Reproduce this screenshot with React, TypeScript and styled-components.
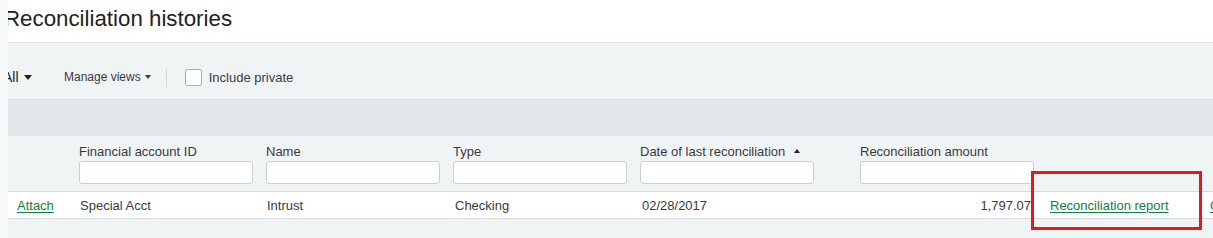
import styled, { createGlobalStyle } from "styled-components";

const GlobalStyle = createGlobalStyle`
  html, body {
    margin: 0;
    padding: 0;
    background: #f1f4f5;
    font-family: "Liberation Sans", Arial, sans-serif;
    color: #393a3d;
  }
`;

const columns = [
    { key: "id", label: "Financial account ID" },
    { key: "name", label: "Name" },
    { key: "type", label: "Type" },
    { key: "date", label: "Date of last reconciliation", sorted: true, wide: true },
    { key: "amount", label: "Reconciliation amount" },
];

const row = {
    id: "Special Acct",
    name: "Intrust",
    type: "Checking",
    date: "02/28/2017",
    amount: "1,797.07",
};

export default function App() {
    return (
        <Page>
            <GlobalStyle />
            <Sidebar />
            <Main>
                <TitleBar>
                    <Title>Reconciliation histories</Title>
                </TitleBar>
                <Toolbar>
                    <ViewPicker>
                        All <Caret />
                    </ViewPicker>
                    <ManageViews>
                        Manage views <SmallCaret />
                    </ManageViews>
                    <Divider />
                    <CheckLabel>
                        <Box />
                        Include private
                    </CheckLabel>
                </Toolbar>
                <Band />
                <Table>
                    <HeaderRow>
                        <HeadCell $width={64} />
                        {columns.map((c) => (
                            <HeadCell key={c.key} $width={c.wide ? 220 : 187}>
                                <HeadLabel>
                                    {c.label}
                                    {c.sorted && <SortArrow />}
                                </HeadLabel>
                                <Filter />
                            </HeadCell>
                        ))}
                    </HeaderRow>
                    <DataRow>
                        <Cell $width={64} $pad={9}>
                            <TableLink>Attach</TableLink>
                        </Cell>
                        <Cell $width={187}>{row.id}</Cell>
                        <Cell $width={188}>{row.name}</Cell>
                        <Cell $width={187}>{row.type}</Cell>
                        <Cell $width={220}>{row.date}</Cell>
                        <Cell $width={188} $right>{row.amount}</Cell>
                        <Cell $width={160}>
                            <TableLink>Reconciliation report</TableLink>
                        </Cell>
                        <Cell $width={120}>
                            <TableLink>Clear</TableLink>
                        </Cell>
                    </DataRow>
                    <Highlight />
                </Table>
            </Main>
        </Page>
    );
}

const Page = styled.div`
    display: flex;
    width: 100%;
    height: 238px;
    overflow: hidden;
`;

const Sidebar = styled.div`
    flex: 0 0 8px;
    background: #f8fafc;
    position: relative;
    z-index: 2;
`;

const Main = styled.div`
    flex: 1;
    min-width: 0;
    overflow: hidden;
    background: #f1f4f5;
`;

const TitleBar = styled.div`
    height: 42px;
    background: #fff;
    border-bottom: 1px solid #dfe4e7;
    display: flex;
    align-items: center;
`;

const Title = styled.h1`
    margin: 0 0 0 -4px;
    font-size: 22.3px;
    font-weight: normal;
    color: #222;
    white-space: nowrap;
    padding-bottom: 4px;
`;

const Toolbar = styled.div`
    height: 57px;
    box-sizing: border-box;
    padding-top: 12px;
    display: flex;
    align-items: center;
    border-bottom: 1px solid #d6dcdf;
`;

const ViewPicker = styled.div`
    margin-left: -5px;
    font-size: 14px;
    color: #222;
    display: flex;
    align-items: center;
    gap: 5px;
    width: 61px;
`;

const Caret = styled.span`
    width: 0;
    height: 0;
    border-left: 4px solid transparent;
    border-right: 4px solid transparent;
    border-top: 5px solid #222;
`;

const ManageViews = styled.div`
    font-size: 12px;
    color: #393a3d;
    display: flex;
    align-items: center;
    gap: 4px;
`;

const SmallCaret = styled.span`
    width: 0;
    height: 0;
    border-left: 3.5px solid transparent;
    border-right: 3.5px solid transparent;
    border-top: 4px solid #393a3d;
`;

const Divider = styled.div`
    width: 1px;
    height: 19px;
    background: #d4d7dc;
    margin: 0 18px 0 15px;
`;

const CheckLabel = styled.label`
    display: flex;
    align-items: center;
    gap: 7px;
    font-size: 13px;
    color: #393a3d;
`;

const Box = styled.span`
    width: 15px;
    height: 15px;
    background: #fff;
    border: 1px solid #a9b0b5;
    border-radius: 2px;
`;

const Band = styled.div`
    height: 36px;
    background: #e3e9eb;
`;

const Table = styled.div`
    position: relative;
`;

const HeaderRow = styled.div`
    display: flex;
    height: 55px;
    border-bottom: 1px solid #d6dcdf;
`;

const HeadCell = styled.div<{ $width: number }>`
    flex: 0 0 ${(p) => p.$width}px;
    padding: 5px 0 0 7px;
    box-sizing: border-box;
`;

const HeadLabel = styled.div`
    font-size: 13px;
    color: #393a3d;
    height: 20px;
    display: flex;
    align-items: center;
    white-space: nowrap;
`;

const SortArrow = styled.span`
    margin-left: 9px;
    width: 0;
    height: 0;
    border-left: 3.5px solid transparent;
    border-right: 3.5px solid transparent;
    border-bottom: 4px solid #222;
`;

const Filter = styled.div`
    width: 174px;
    height: 23px;
    box-sizing: border-box;
    background: #fff;
    border: 1px solid #c9d0d4;
    border-radius: 3px;
`;

const DataRow = styled.div`
    display: flex;
    height: 26px;
    background: #fff;
    border-bottom: 1px solid #d6dcdf;
    white-space: nowrap;
`;

const Cell = styled.div<{ $width: number; $right?: boolean; $pad?: number }>`
    flex: 0 0 ${(p) => p.$width}px;
    box-sizing: border-box;
    display: flex;
    align-items: center;
    justify-content: ${(p) => (p.$right ? "flex-end" : "flex-start")};
    padding: ${(p) => (p.$right ? "0 11px 0 0" : `0 0 0 ${p.$pad ?? 8}px`)};
    font-size: 13px;
    color: #393a3d;
`;

const TableLink = styled.a`
    color: #108043;
    text-decoration: underline;
    text-underline-offset: 2px;
    cursor: pointer;
`;

const Highlight = styled.div`
    position: absolute;
    left: 1023px;
    top: 35px;
    width: 171px;
    height: 59px;
    box-sizing: border-box;
    border: 3px solid #e5171f;
    pointer-events: none;
`;
